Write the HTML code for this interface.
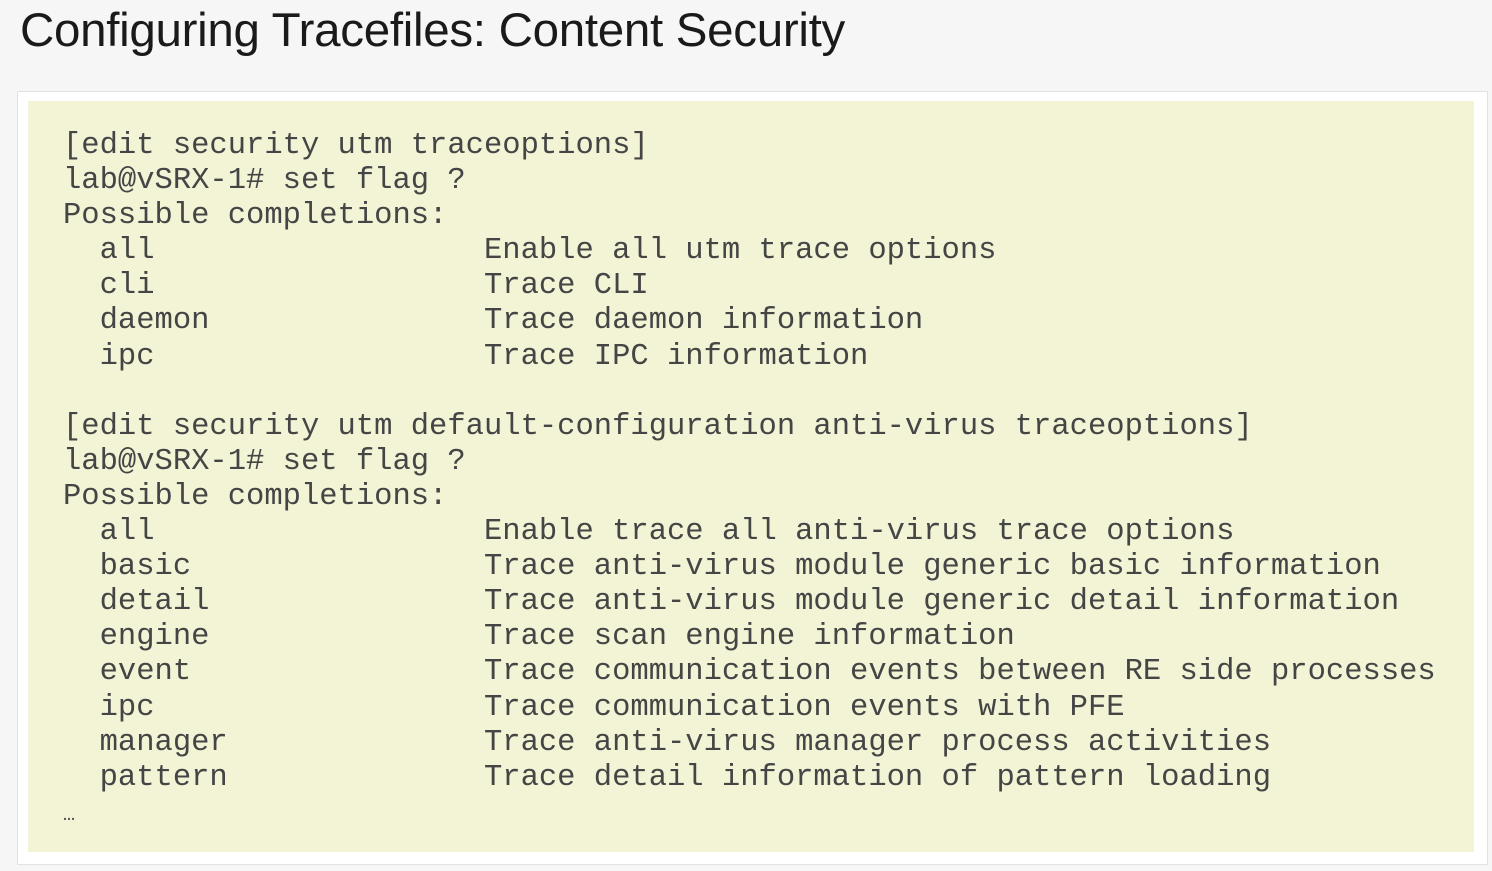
<!DOCTYPE html>
<html><head><meta charset="utf-8"><style>
html,body{margin:0;padding:0;}
body{width:1492px;height:871px;background:#f6f6f6;position:relative;overflow:hidden;font-family:"Liberation Sans",sans-serif;}
h1{position:absolute;left:20px;top:3px;margin:0;font-weight:normal;font-size:47.5px;color:#1a1a1a;letter-spacing:-0.3px;white-space:nowrap;}
.outer{position:absolute;left:17px;top:91px;width:1469px;height:772px;background:#fff;border:1px solid #e2e2e2;}
.inner{position:absolute;left:28px;top:101px;width:1446px;height:751px;background:#f2f4d5;}
pre{position:absolute;left:63px;top:129px;margin:0;font-family:"Liberation Mono","Courier New",monospace;font-size:30.5px;line-height:35.1px;color:#454545;}
.el{font-size:20px;}
</style></head><body>
<h1>Configuring Tracefiles: Content Security</h1>
<div class="outer"></div>
<div class="inner"></div>
<pre>[edit security utm traceoptions]
lab@vSRX-1# set flag ?
Possible completions:
  all                  Enable all utm trace options
  cli                  Trace CLI
  daemon               Trace daemon information
  ipc                  Trace IPC information

[edit security utm default-configuration anti-virus traceoptions]
lab@vSRX-1# set flag ?
Possible completions:
  all                  Enable trace all anti-virus trace options
  basic                Trace anti-virus module generic basic information
  detail               Trace anti-virus module generic detail information
  engine               Trace scan engine information
  event                Trace communication events between RE side processes
  ipc                  Trace communication events with PFE
  manager              Trace anti-virus manager process activities
  pattern              Trace detail information of pattern loading
<span class="el">…</span></pre>
</body></html>
